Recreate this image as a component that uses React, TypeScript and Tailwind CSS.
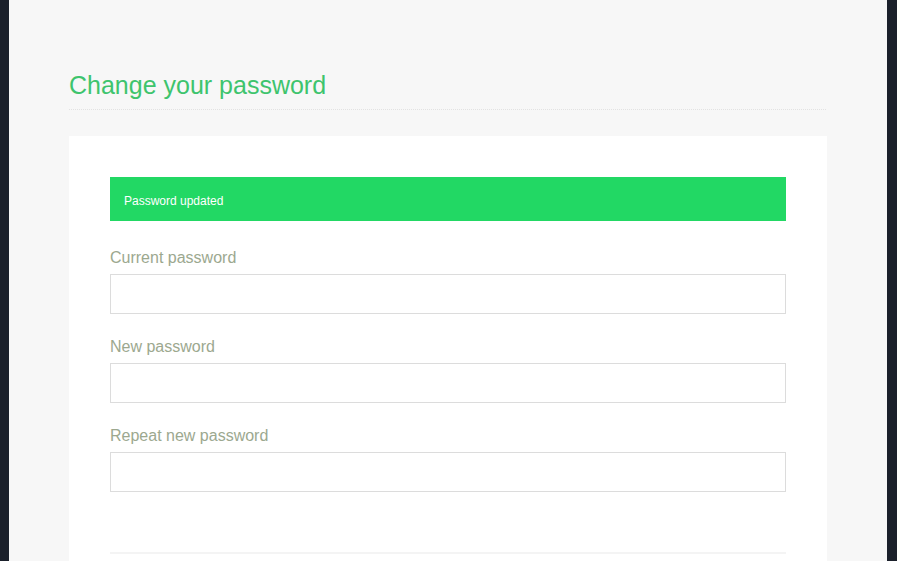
const fields = ['Current password', 'New password', 'Repeat new password'];

export default function App() {
  return (
    <div className="flex min-h-[561px] bg-[#1b202b] font-['Liberation_Sans',Arial,sans-serif]">
      <main className="ml-[9px] mr-[10px] flex-1 bg-[#f7f7f7] px-[60px] pt-[69px]">
        <h1 className="text-[25px] leading-[32px] text-[#3ec46d]">Change your password</h1>
        <div className="mt-[8px] mr-px border-b border-dotted border-[#e2e2e2]" />
        <div className="mt-[26px] bg-white px-[41px] pt-[41px] pb-[8px]">
          <div className="flex h-[44px] items-center bg-[#22d864] px-[14px] pt-[3px] text-[12px] text-white">
            Password updated
          </div>
          <form className="mt-[27px]">
            {fields.map((label) => (
              <div key={label} className="mb-[23px]">
                <label className="block text-[16px] leading-[20px] text-[#9ca88f]">{label}</label>
                <input
                  type="password"
                  className="mt-[6px] block h-[40px] w-full border border-[#dcdcdc] bg-white px-3 outline-none"
                />
              </div>
            ))}
            <div className="mt-[60px] border-t-2 border-[#f4f4f4]" />
          </form>
        </div>
      </main>
    </div>
  );
}
